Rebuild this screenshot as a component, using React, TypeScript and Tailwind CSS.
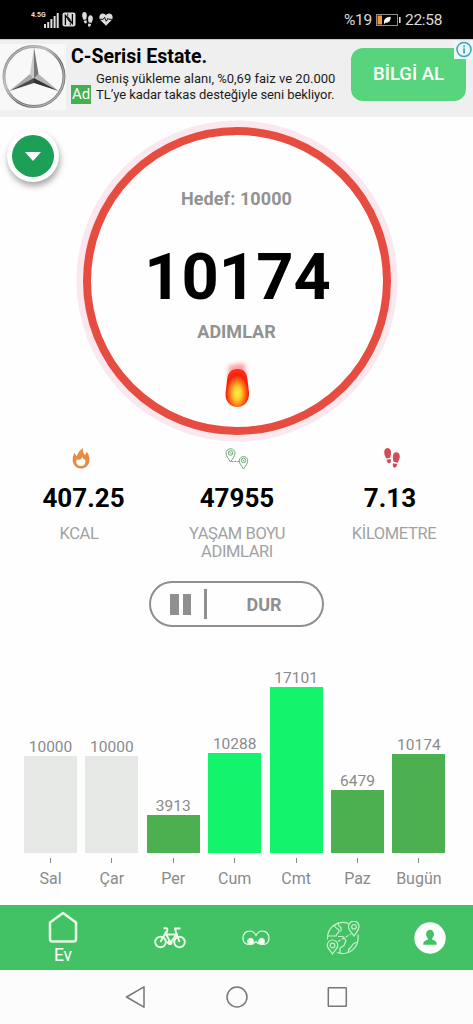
import type { ReactNode } from "react";
import clsx from "clsx";

const days = [
  { label: "Sal", steps: 10000, height: 97, color: "bg-[#e5e8e5]" },
  { label: "Çar", steps: 10000, height: 97, color: "bg-[#e5e8e5]" },
  { label: "Per", steps: 3913, height: 38, color: "bg-[#4caf50]" },
  { label: "Cum", steps: 10288, height: 100, color: "bg-[#14f36c]" },
  { label: "Cmt", steps: 17101, height: 166.5, color: "bg-[#14f36c]" },
  { label: "Paz", steps: 6479, height: 63, color: "bg-[#4caf50]" },
  { label: "Bugün", steps: 10174, height: 99, color: "bg-[#4caf50]" },
];

/* Left and right shoe print, shared by the status bar and the stats row */
function Footsteps({ className }: { className?: string }) {
  return (
    <svg viewBox="0 0 16 20" preserveAspectRatio="none" fill="currentColor" className={className}>
      <path d="M3.400 0C6 0 7.200 2.300 7 5c-.1 1.900-.5 3.300-.8 4.800L2.300 10.600C1.500 8.500.2 7 .2 4.400.2 2 1.300.2 3.400 0Z" />
      <path d="M2.600 11.800l3.900-.7c.7 1.400.8 3.900-1 4.200-1.900.3-2.700-1.800-2.900-3.500Z" />
      <path d="M12.400 4.200c2.200.1 3.500 1.900 3.400 4.400-.1 2.400-1.200 4.200-2.100 6.100L9.500 13.700c-.3-1.600-.7-3-.6-4.900.1-2.800 1.200-4.700 3.500-4.600Z" />
      <path d="M9.300 15.200l3.900.8c-.3 1.900-1.200 4-3 3.600-1.800-.4-1.700-2.900-.9-4.400Z" />
    </svg>
  );
}

function StatusBar() {
  return (
    <div className="flex h-[39px] shrink-0 items-center bg-black pl-[31px] text-[#dcdcdc]">
      <div className="flex h-[18px] w-7">
        <span className="w-[13px] text-[7px] leading-[9px] font-bold">4.5G</span>
        <svg viewBox="0 0 15 18" fill="currentColor" className="h-[18px] w-[15px]">
          <rect x="0" y="13" width="2" height="4" />
          <rect x="3.200" y="11" width="2" height="6" />
          <rect x="6.400" y="8" width="2" height="9" />
          <rect x="9.600" y="5" width="2" height="12" />
          <rect x="12.700" y="2" width="2" height="15" />
        </svg>
      </div>
      <svg viewBox="0 0 14 15" className="ml-[3px] h-[15px] w-[14px]">
        <rect x=".5" y=".5" width="13" height="14" rx="2" fill="#dcdcdc" />
        <path d="M3.400 13V3.500l7 8V2" fill="none" stroke="#000" strokeWidth="1.300" />
        <path d="M5.700 1.500v3l2.700 3.300M8.300 13.500v-3L5.600 7.200" fill="none" stroke="#000" strokeWidth=".8" />
      </svg>
      <Footsteps className="ml-[6px] h-[15px] w-[11px]" />
      <svg viewBox="0 0 14 13" className="ml-[6px] h-[13px] w-[14px]">
        <path d="M7 12.700 1.300 7C-.6 4.600.4 1 3.400.6 5 .4 6.300 1.300 7 2.400 7.700 1.300 9 .4 10.600.6c3 .4 4 4 2.100 6.400Z" fill="#dcdcdc" />
        <path d="M1 6.300h3.300l1.300-2 1.700 4 1.600-3 .8 1H13" fill="none" stroke="#000" strokeWidth=".9" />
      </svg>
      <span className="ml-[231px] w-[32px] text-[15.500px] leading-5 tracking-[-0.300px]">%19</span>
      <svg viewBox="0 0 25 12" className="h-3 w-[25px]">
        <rect x=".5" y=".5" width="21" height="11" fill="none" stroke="#8f8f8f" />
        <rect x="1.500" y="1.500" width="4.500" height="9" fill="#f19a30" />
        <path d="M8 9.500C7.500 5 10 2.800 14.700 2.700c.1 4-1.700 6.300-5.200 6L8.600 9.900Z" fill="#f2f2f2" />
        <rect x="23" y="3" width="1.600" height="6" fill="#dcdcdc" />
      </svg>
      <span className="ml-[4px] text-[15.500px] leading-5 tracking-[-0.300px]">22:58</span>
    </div>
  );
}

function StarLogo() {
  return (
    <svg viewBox="0 0 66 66" className="h-[66px] w-[66px] bg-[#f8f8f8]">
      <defs>
        <linearGradient id="rim" x1="0" y1="0" x2="1" y2="1">
          <stop offset="0" stopColor="#777" />
          <stop offset=".35" stopColor="#b9b9b9" />
          <stop offset=".6" stopColor="#666" />
          <stop offset="1" stopColor="#a5a5a5" />
        </linearGradient>
      </defs>
      <circle cx="34" cy="32.500" r="30" fill="none" stroke="url(#rim)" strokeWidth="3" />
      <circle cx="34" cy="32.500" r="30" fill="none" stroke="#ccc" strokeWidth=".7" />
      <path d="M34 3 30 30l4 5Z" fill="#c9c9c9" />
      <path d="M34 3l4.500 27-4.500 5Z" fill="#777" />
      <path d="M9.500 47 30 30l4 5Z" fill="#aaa" />
      <path d="M9.500 47 34 34v5Z" fill="#4b4b4b" />
      <path d="M58.500 47 38.500 30 34 34Z" fill="#b4b4b4" />
      <path d="M58.500 47 34 34v5Z" fill="#333" />
    </svg>
  );
}

function AdBanner() {
  return (
    <div className="relative flex h-[78px] shrink-0 border-t border-[#c9c9c9] bg-[#efefef]">
      <div className="w-[71px] pt-1">
        <StarLogo />
      </div>
      <div className="w-[280px] pt-[6px]">
        <div className="text-[19.500px] leading-[22px] font-bold whitespace-nowrap text-black">C-Serisi Estate.</div>
        <div className="mt-[3px] flex items-end">
          <span className="mb-[-2px] h-[19px] w-5 bg-[#45b050] text-center text-[15px] leading-[19px] text-white">Ad</span>
          <div className="ml-[5px] text-[13px] leading-[15.500px] whitespace-nowrap text-[#1c1c1c]">
            <div className="tracking-[0.010px]">Geniş yükleme alanı, %0,69 faiz ve 20.000</div>
            <div className="tracking-[-0.060px]">TL’ye kadar takas desteğiyle seni bekliyor.</div>
          </div>
        </div>
      </div>
      <button className="mt-2 h-[53px] w-[115px] rounded-[12px] bg-[#58d57c] text-[18.500px] font-medium text-white">
        BİLGİ AL
      </button>
      <div className="absolute top-px right-0 h-[18px] w-[19px] bg-[#eef6f6]">
        <svg viewBox="0 0 19 18" className="h-[18px] w-[19px]">
          <circle cx="10" cy="8.500" r="7" fill="none" stroke="#2fa8bd" strokeWidth="1.500" />
          <rect x="9.200" y="7.500" width="1.700" height="5" fill="#2fa8bd" />
          <rect x="9.200" y="4.500" width="1.700" height="1.800" fill="#2fa8bd" />
        </svg>
      </div>
    </div>
  );
}

function Fireball() {
  return (
    <svg viewBox="0 0 30 48" className="h-[48px] w-[30px] overflow-visible">
      <defs>
        <radialGradient id="core" cx=".5" cy=".64" r=".58">
          <stop offset="0" stopColor="#fff04a" />
          <stop offset=".3" stopColor="#ffcb2e" />
          <stop offset=".55" stopColor="#fd7a17" />
          <stop offset=".82" stopColor="#f7200e" />
          <stop offset="1" stopColor="#fb2d14" />
        </radialGradient>
        <filter id="soft" x="-50%" y="-50%" width="200%" height="200%">
          <feGaussianBlur stdDeviation="2" />
        </filter>
        <filter id="edge">
          <feGaussianBlur stdDeviation=".7" />
        </filter>
      </defs>
      <path d="M7 5c4 2 7-3 16-1l1 15H6Z" fill="#f6454a" opacity=".5" filter="url(#soft)" />
      <path d="M15.500 9c6.500 0 9.500 4 10 10.500l1.500 13C27.500 40.500 23 47 15.500 47S3 41 3.500 33.500L5 20C6 12.500 9 9 15.500 9Z" fill="url(#core)" filter="url(#edge)" />
    </svg>
  );
}

function StepRing() {
  return (
    <div className="relative grid h-[328px] shrink-0 justify-center">
      <svg viewBox="0 0 328 328" className="col-start-1 row-start-1 h-[328px] w-[328px]">
        <circle cx="164" cy="164" r="157" fill="none" stroke="#fbe8ef" strokeWidth="7" />
        <circle cx="164" cy="164" r="150" fill="none" stroke="#e74c40" strokeWidth="8" />
      </svg>
      <div className="col-start-1 row-start-1 flex flex-col items-center pt-[72px] whitespace-nowrap">
        <span className="text-[18px] leading-5 font-bold tracking-[0.100px] text-[#929292]">Hedef: 10000</span>
        <span className="mt-[35px] pl-[2px] text-[65px] leading-[66px] font-bold text-black">10174</span>
        <span className="mt-3 text-[18px] leading-5 font-bold text-[#929292]">ADIMLAR</span>
        <div className="mt-[18px] pl-px">
          <Fireball />
        </div>
      </div>
      <button className="absolute top-[13px] left-[7px] flex h-[52px] w-[52px] items-center justify-center rounded-full bg-white shadow-[1px_4px_6px_rgba(0,0,0,0.35)]">
        <span className="flex h-[42px] w-[42px] items-center justify-center rounded-full bg-[#1c9f57]">
          <svg viewBox="0 0 16 9" className="h-[9px] w-4">
            <path d="M0 0h16L8 9Z" fill="#fff" />
          </svg>
        </span>
      </button>
    </div>
  );
}

function FlameIcon() {
  return (
    <svg viewBox="0 0 18 21" className="h-[21px] w-[18px]">
      <path
        fillRule="evenodd"
        d="M11 0c-.5 3.500.3 4.700 1.800 7 1-1 1.700-2 1.900-3.400 2 2.600 3 5.600 2.800 8.600C17.200 17 13.500 20.500 9 20.500S.9 17 .7 12.500C.5 9 1.500 6.700 2.800 4.500c.3 1.500.8 2.800 2 3.700C5.800 4.800 7.800 2 11 0ZM10.500 9c-.8 1.800-2 2.300-3.500 2.800l-2.200-.3c-1.500 3 .4 6.600 4.200 6.600 3.600 0 5.200-3.400 4-6.900l-1.300.6c-.3-1-.6-1.800-1.200-2.800Z"
        fill="#e88b43"
      />
    </svg>
  );
}

function PinsIcon() {
  return (
    <svg viewBox="0 0 24 22" fill="none" stroke="#5f9d68" strokeWidth=".9" className="h-[22px] w-6">
      <path d="M5.500 14C3.500 10.500 1 8.300 1 5.300a4.500 4.500 0 0 1 9 0c0 3-2.500 5.200-4.500 8.700Z" />
      <path d="M18.500 21c-2-3.500-4.200-5.200-4.200-8.200a4.200 4.200 0 0 1 8.400 0c0 3-2.200 4.700-4.200 8.200Z" />
      <circle cx="5.500" cy="5" r="2.300" />
      <circle cx="18.500" cy="12.500" r="2.200" />
      <path d="M4.500 4.500l2 1M17.500 12l2 1" />
      <path d="M6.500 13.500H14" strokeDasharray="2 1" />
    </svg>
  );
}

function Stat({ icon, value, label, className, valueClass, labelClass }: {
  icon: ReactNode;
  value: string;
  label: ReactNode;
  className: string;
  valueClass?: string;
  labelClass?: string;
}) {
  return (
    <div className={clsx("flex flex-col items-center", className)}>
      <div className="flex h-[38px] items-start pt-[3px]">{icon}</div>
      <div className={clsx("text-[26px] leading-[30px] font-bold text-black", valueClass)}>{value}</div>
      <div className={clsx("mt-3 text-center text-[16.500px] leading-[18px] tracking-[-0.400px] whitespace-nowrap text-[#a2a2a2]", labelClass)}>
        {label}
      </div>
    </div>
  );
}

function Chart() {
  return (
    <div className="mt-[39px] flex h-[222px] shrink-0 items-end gap-[8.400px] pl-6">
      {days.map((day) => (
        <div key={day.label} className="flex w-[53px] flex-col items-center text-[#8a8a8a]">
          <span className="mb-px text-[15.500px] leading-4">{day.steps}</span>
          <div className={clsx("w-full", day.color)} style={{ height: day.height }} />
          <div className="mt-[5px] h-[5px] w-px bg-[#8a8a8a]" />
          <span className="mt-[6px] text-[16px] leading-[19px]">{day.label}</span>
        </div>
      ))}
    </div>
  );
}

function TabBar() {
  return (
    <nav className="flex h-[65px] shrink-0 items-center bg-[#42c264] text-white">
      <button className="flex h-full w-[126px] flex-col items-center pt-[6px]">
        <svg viewBox="0 0 30 32" className="h-8 w-[30px]" fill="none" stroke="#eafbe9" strokeWidth="2.500" strokeLinejoin="round">
          <path d="M15 2 28 11.500V28a2.500 2.500 0 0 1-2.500 2.500H4.500A2.500 2.500 0 0 1 2 28V11.500Z" />
        </svg>
        <span className="mt-[2px] text-[17.500px] leading-5">Ev</span>
      </button>
      <button className="flex w-[88px] justify-center">
        <svg viewBox="0 0 32 22" className="h-[22px] w-8" fill="none" stroke="#eafbe9" strokeWidth="1.900">
          <circle cx="6.500" cy="15" r="5.300" />
          <circle cx="25.500" cy="15" r="5.300" />
          <path d="M6.500 15 11.500 6l5 9.500h-4M11.500 7.500h11L16.500 15.500M25.500 15 21.500 4M20 1.500h6.500M21.500 4V1.500M12.500 6l.8-3c.3-1.500-.3-1.800-1.500-1.800H9.500" />
          <circle cx="16" cy="15.500" r="1.600" fill="#eafbe9" />
        </svg>
      </button>
      <button className="flex w-[83px] justify-center">
        <svg viewBox="0 0 28 16" className="h-4 w-7" fill="none" stroke="#eafbe9" strokeWidth="1.200">
          <path d="M14 5.500C12.500 2.500 10.500 1 7.700 1 3.800 1 1 4 1 8c0 4 2.500 6.500 6.500 6.500 3 0 5-1 6.500-3 1.500 2 3.500 3 6.500 3 4 0 6.500-2.500 6.500-6.500 0-4-2.800-7-6.700-7C17.500 1 15.500 2.500 14 5.500Z" />
          <circle cx="8.500" cy="11.300" r="2.800" fill="#fff" />
          <circle cx="19.500" cy="11.300" r="2.800" fill="#fff" />
        </svg>
      </button>
      <button className="flex w-[92px] justify-center">
        <svg viewBox="0 0 34 34" className="h-[34px] w-[34px]" fill="none" stroke="#c9f3cd" strokeWidth="1.200">
          <path d="M22.500 2.500C12-1.500 1 6 1.500 18.500M11 31.500c12 4 22.500-5 21-18" />
          <path d="M28 15c-3-4-5.500-6-5.500-9.500a5.300 5.300 0 0 1 10.600 0C33.100 9 30.500 11 28 15Z" />
          <circle cx="28" cy="5.800" r="2.300" />
          <path d="M6.500 33C4 29 1.200 27.500 1.200 24.300a5.300 5.300 0 0 1 10.600 0C11.800 27.500 9 29 6.500 33Z" />
          <circle cx="6.500" cy="24.500" r="2.300" />
          <path d="M8.500 4c0 4 4 3 4.500 5.500s-3 3-3 5.500H1.500M12.500 1.500c-1 3 1 4 2.500 5v4M12 15.500h5l3 4-2 5-4 2.500v5M22.500 31.500c-1-4 2-4 3-6s1.500-4 6-4" />
          <path d="M12 20.500 25 13" strokeDasharray="3 1.500" />
        </svg>
      </button>
      <button className="flex w-[81px] justify-center">
        <svg viewBox="0 0 32 32" className="h-8 w-8">
          <circle cx="16" cy="16" r="15.700" fill="#fff" />
          <ellipse cx="16" cy="12.200" rx="3.900" ry="4.500" fill="#42c264" />
          <path d="M13.800 15h4.400v2.700c2.500.8 4.600 1.300 4.600 5.100H9.200c0-3.800 2.100-4.300 4.600-5.100Z" fill="#42c264" />
        </svg>
      </button>
    </nav>
  );
}

function SystemNav() {
  return (
    <div className="flex h-[54px] shrink-0 items-center justify-center gap-[78px] bg-[#fcfcfc] text-[#777]">
      <svg viewBox="0 0 22 24" className="h-6 w-[22px]" fill="none" stroke="currentColor" strokeWidth="1.500" strokeLinejoin="round">
        <path d="M1.500 12 19 1.800v20.400Z" />
      </svg>
      <svg viewBox="0 0 24 24" className="h-6 w-6" fill="none" stroke="currentColor" strokeWidth="1.500">
        <circle cx="12" cy="12" r="10" />
      </svg>
      <svg viewBox="0 0 22 24" className="h-6 w-[22px]" fill="none" stroke="currentColor" strokeWidth="1.500">
        <rect x="1.300" y="2.800" width="18" height="18.400" rx=".5" />
      </svg>
    </div>
  );
}

export default function App() {
  return (
    <div className="flex h-[1024px] w-[473px] flex-col overflow-hidden bg-[#fefefe] font-['Roboto',sans-serif]">
      <StatusBar />
      <AdBanner />
      <main className="flex h-[788px] shrink-0 flex-col">
        <StepRing />
        <div className="flex h-[136px] shrink-0">
          <Stat
            className="w-[162px]"
            icon={<FlameIcon />}
            value="407.25"
            label="KCAL"
            valueClass="pl-[5px]"
            labelClass="pr-1"
          />
          <Stat
            className="w-[150px]"
            icon={<PinsIcon />}
            value="47955"
            label={
              <>
                YAŞAM BOYU
                <br />
                ADIMLARI
              </>
            }
          />
          <Stat
            className="w-[160px]"
            icon={<Footsteps className="h-5 w-4 text-[#d24b55]" />}
            value="7.13"
            label="KİLOMETRE"
            valueClass="pr-1"
            labelClass="pl-1"
          />
        </div>
        <button className="ml-[149px] flex h-[46px] w-[175px] shrink-0 items-center rounded-full border-2 border-[#8f8f8f] pl-[19px] text-[#8f8f8f]">
          <span className="h-[21px] w-[8.500px] bg-[#8f8f8f]" />
          <span className="ml-1 h-[21px] w-[8.500px] bg-[#8f8f8f]" />
          <span className="ml-[13px] h-[30px] w-[2.500px] bg-[#8f8f8f]" />
          <span className="ml-[40px] pt-px text-[18px] leading-5 font-bold">DUR</span>
        </button>
        <Chart />
      </main>
      <TabBar />
      <SystemNav />
    </div>
  );
}
